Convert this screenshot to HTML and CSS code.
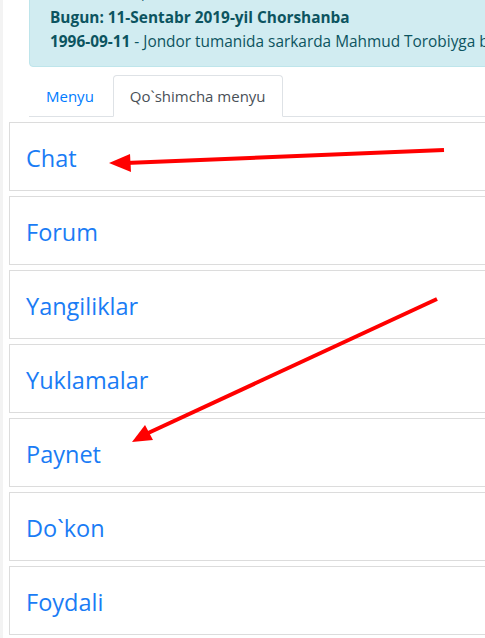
FILE: index.html
```html
<!DOCTYPE html>
<html>
<head>
<meta charset="utf-8">
<link rel="stylesheet" href="styles.css">
</head>
<body>
<div class="page">
  <div class="inner">
    <div class="alert">
      <div class="line">Xush kelibsiz, hurmatli mehmon!</div>
      <div class="line"><b>Bugun: 11-Sentabr 2019-yil Chorshanba</b></div>
      <div class="line"><b>1996-09-11</b> - Jondor tumanida sarkarda Mahmud Torobiyga boshchiligida qo`zg`olon</div>
    </div>
    <ul class="tabs">
      <li><a class="tab" href="#">Menyu</a></li>
      <li><a class="tab active" href="#">Qo`shimcha menyu</a></li>
    </ul>
  </div>
  <div class="list">
    <a class="item" href="#">Chat</a>
    <a class="item" href="#">Forum</a>
    <a class="item" href="#">Yangiliklar</a>
    <a class="item" href="#">Yuklamalar</a>
    <a class="item" href="#">Paynet</a>
    <a class="item" href="#">Do`kon</a>
    <a class="item" href="#">Foydali</a>
  </div>
  <svg class="arrows" width="485" height="638" viewBox="0 0 485 638">
    <line x1="444" y1="150" x2="126" y2="163" stroke="#ff0000" stroke-width="4"/>
    <polygon points="109,163 130,154 131,172" fill="#ff0000"/>
    <line x1="437" y1="299" x2="146" y2="434" stroke="#ff0000" stroke-width="4"/>
    <polygon points="132,442 145,425 153,440" fill="#ff0000"/>
  </svg>
</div>
</body>
</html>
```
FILE: styles.css
```css
html, body {
  margin: 0;
  padding: 0;
  background: #fff;
  overflow: hidden;
}
body {
  font-family: "Open Sans", "Noto Sans", sans-serif;
  font-size: 16px;
  line-height: 24px;
  color: #212529;
}
.page {
  position: relative;
  width: 485px;
  height: 638px;
  overflow: hidden;
  border-left: 3px solid #f3f3f3;
  box-sizing: border-box;
}
.inner {
  margin-top: -31px;
  margin-left: 26px;
  width: 600px;
}
.alert {
  background: #d1ecf1;
  border: 1px solid #bee5eb;
  border-radius: 4px;
  color: #0c5460;
  padding: 12px 20px;
  margin-bottom: 8px;
  font-size: 15.4px;
  white-space: nowrap;
}
.alert b {
  font-weight: 700;
}
.tabs {
  list-style: none;
  margin: 0;
  padding: 0;
  display: flex;
  gap: 2px;
  border-bottom: 1px solid #dee2e6;
}
.tabs li {
  margin-bottom: -1px;
}
.tab {
  display: block;
  padding: 8px 16px;
  border: 1px solid transparent;
  border-top-left-radius: 4px;
  border-top-right-radius: 4px;
  color: #007bff;
  text-decoration: none;
  font-size: 15px;
}
.tab.active {
  color: #495057;
  background: #fff;
  border-color: #dee2e6 #dee2e6 #fff;
}
.list {
  margin-top: 5px;
  margin-left: 6px;
  width: 600px;
  display: flex;
  flex-direction: column;
  gap: 5px;
}
.item {
  display: block;
  border: 1px solid #dcdcdc;
  padding: 17px 16px 14px;
  font-size: 23.5px;
  line-height: 36px;
  color: #1a7cf5;
  text-decoration: none;
}
.arrows {
  position: absolute;
  left: -3px;
  top: 0;
  pointer-events: none;
}
```
